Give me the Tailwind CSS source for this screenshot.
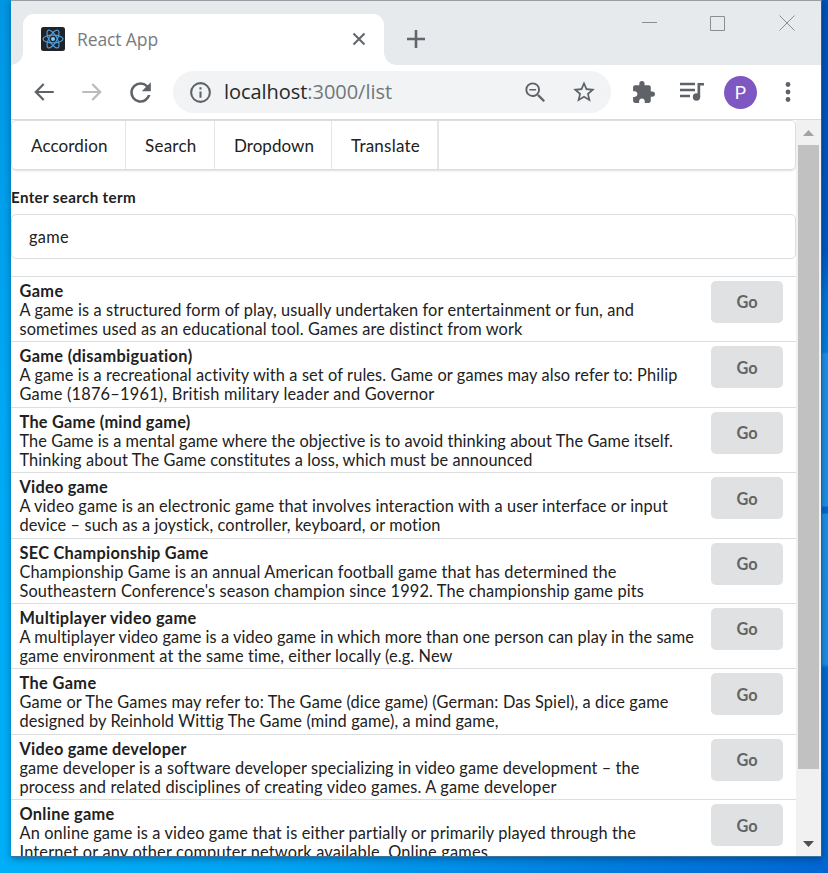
<!DOCTYPE html>
<html lang="en">
<head>
<meta charset="utf-8">
<title>React App</title>
<script src="https://cdn.jsdelivr.net/npm/@tailwindcss/browser@4"></script>
</head>
<body class="w-[828px] h-[873px] overflow-hidden bg-[linear-gradient(180deg,#0052b8_0,#0058c4_250px,#0078d8_300px,#0080e2_352px,#1c92e8_354px,#1c92e8_506px,#0068d0_507px,#0068d0_513px,#1c92e8_514px,#1c8fe6_664px,#006cd0_668px,#0068d0_830px),linear-gradient(180deg,#0096e2_0,#00a8f4_400px,#00aff8_860px),linear-gradient(90deg,#00aff8_0,#00a2f2_35%,#0084e2_65%,#0066d2_100%)] bg-no-repeat bg-[position:right_top,left_top,left_bottom] bg-[size:12px_857px,12px_857px,828px_16px] pl-[11px]">
<div class="w-[811px] h-[857px] flex flex-col bg-white overflow-hidden border-r border-b border-t border-t-[#9a9da1] border-r-[#2a5f96] border-b-[#39739f] shadow-[0_2px_7px_rgba(0,20,50,0.4)]">
  <header class="shrink-0 h-[64px] bg-[#e6eaed] flex items-end">
    <div class="w-[12px] h-[12px] shrink-0 bg-[radial-gradient(circle_at_0_0,#e6eaed_11.5px,#fff_12px)]"></div>
    <div class="w-[361px] h-[51px] shrink-0 bg-white rounded-t-[11px] flex items-center pl-[18px] pr-[18px] pb-[2px]">
      <svg class="w-6 h-6 shrink-0" viewBox="0 0 24 24"><rect width="24" height="24" rx="2.5" fill="#222326"/><g fill="none" stroke="#4d9fe0" stroke-width="1.2"><ellipse cx="12" cy="12" rx="10" ry="3.9"/><ellipse cx="12" cy="12" rx="10" ry="3.9" transform="rotate(60 12 12)"/><ellipse cx="12" cy="12" rx="10" ry="3.9" transform="rotate(120 12 12)"/></g><circle cx="12" cy="12" r="2" fill="#8cc8f5"/></svg>
      <span class="ml-[12px] text-[17.500px] leading-6 text-[#777b7f] font-['Open_Sans',sans-serif] whitespace-nowrap" data-fit="81">React App</span>
      <svg class="w-[14px] h-[14px] ml-auto" viewBox="0 0 14 14" stroke="#63666a" stroke-width="2.1"><path d="M1.5 1.5 12.5 12.5M12.5 1.5 1.5 12.5"/></svg>
    </div>
    <div class="w-[12px] h-[12px] shrink-0 bg-[radial-gradient(circle_at_100%_0,#e6eaed_11.5px,#fff_12px)]"></div>
    <svg class="w-[20px] h-[20px] ml-[10px] mb-[16px]" viewBox="0 0 20 20" stroke="#626569" stroke-width="2.6"><path d="M10 1v18M1 10h18"/></svg>
    <svg class="w-[153px] h-[16px] ml-auto mb-[34px] mr-[26px]" viewBox="0 0 153 16" fill="none" stroke="#8b8e91" stroke-width="1"><path d="M0 7.500h15"/><path d="M68.500 1.500h14v14h-14z"/><path d="M137.500 .5 152.500 15.500M152.500 .5 137.500 15.500"/></svg>
  </header>
  <div class="shrink-0 h-[55px] border-b border-[#d9dadc] flex items-center pl-[20px]">
    <svg class="w-[26px] h-[26px]" viewBox="0 0 24 24" fill="#5f6368"><path d="M21 11H6.830l5.590-5.590L11 4l-8 8 8 8 1.410-1.410L6.830 13H21v-2z"/></svg>
    <svg class="w-[26px] h-[26px] ml-[22px]" viewBox="0 0 24 24" fill="#b9bbbd"><path d="M13 4l-1.410 1.410L17.170 11H3v2h14.170l-5.580 5.590L13 20l8-8z"/></svg>
    <svg class="w-[31px] h-[31px] ml-[20px]" viewBox="0 0 24 24" fill="#5f6368"><path d="M17.650 6.350A7.958 7.958 0 0 0 12 4a8 8 0 1 0 7.730 10h-2.080A6 6 0 1 1 12 6c1.660 0 3.140.69 4.220 1.780L13 11h7V4l-2.350 2.350z"/></svg>
    <div class="w-[438px] h-[42px] rounded-full bg-[#f1f3f4] ml-[17px] flex items-center pl-[15px] shrink-0 text-[20px] font-['Open_Sans',sans-serif]">
      <svg class="w-[25px] h-[25px] shrink-0" viewBox="0 0 24 24" fill="#5f6368"><path d="M11 17h2v-6h-2v6zm1-15a10 10 0 1 0 0 20 10 10 0 0 0 0-20zm0 18a8 8 0 1 1 0-16 8 8 0 0 1 0 16zM11 9h2V7h-2v2z"/></svg>
      <span class="ml-[11px] whitespace-nowrap text-[#73777b]" data-fit="168"><span class="text-[#26282b]">localhost</span>:3000/list</span>
      <svg class="w-[27px] h-[27px] ml-auto" viewBox="0 0 24 24" fill="#5f6368"><path d="M15.500 14h-.79l-.28-.27A6.471 6.471 0 0 0 16 9.500 6.500 6.500 0 1 0 9.500 16c1.610 0 3.090-.59 4.230-1.570l.27.28v.79l5 4.990L20.490 19l-4.990-5zm-6 .3a4.800 4.800 0 1 1 0-9.600 4.800 4.800 0 0 1 0 9.600zM6.500 8.800h6v1.500h-6z"/></svg>
      <svg class="w-[26px] h-[26px] ml-[22px] mr-[14px]" viewBox="0 0 24 24" fill="#5f6368"><path d="M22 9.240l-7.190-.62L12 2 9.190 8.630 2 9.240l5.460 4.730L5.820 21 12 17.270 18.180 21l-1.630-7.030L22 9.240zM12 15.400l-3.760 2.270 1-4.280-3.320-2.880 4.380-.38L12 6.100l1.710 4.040 4.380.38-3.320 2.880 1 4.280L12 15.400z"/></svg>
    </div>
    <svg class="w-[25px] h-[25px] ml-[20px]" viewBox="0 0 24 24" fill="#5f6368"><path d="M20.500 11H19V7c0-1.100-.9-2-2-2h-4V3.500a2.500 2.500 0 0 0-5 0V5H4c-1.100 0-1.990.9-1.990 2v3.800H3.500c1.490 0 2.700 1.210 2.700 2.700s-1.210 2.700-2.700 2.700H2V20c0 1.100.9 2 2 2h3.800v-1.500c0-1.490 1.210-2.700 2.700-2.700 1.490 0 2.700 1.210 2.700 2.700V22H17c1.100 0 2-.9 2-2v-4h1.500a2.500 2.500 0 0 0 0-5z"/></svg>
    <svg class="w-[25px] h-[22px] ml-[23px]" viewBox="0 0 25 22"><path d="M1 3h15M1 9h15M1 15h10" stroke="#5f6368" stroke-width="2.300"/><path d="M18.500 2H25v2.500h-3.800V16h-2.700z" fill="#5f6368"/><circle cx="17.500" cy="16" r="3.700" fill="#5f6368"/></svg>
    <div class="w-[33px] h-[33px] rounded-full bg-[#7e57c2] ml-[20px] shrink-0 flex items-center justify-center text-white text-[18px] font-[Roboto,sans-serif]">P</div>
    <svg class="w-[6px] h-[22px] ml-[28px]" viewBox="0 0 6 22" fill="#5f6368"><circle cx="3" cy="3.500" r="2.400"/><circle cx="3" cy="11" r="2.400"/><circle cx="3" cy="18.500" r="2.400"/></svg>
  </div>
  <div class="flex-1 min-h-0 flex">
    <main class="w-[785px] shrink-0 h-full overflow-hidden font-[Lato,sans-serif] text-[16.330px] leading-[19.050px] text-[#212121]">
      <nav class="h-[50px] border border-[#dcddde] rounded-[5px] shadow-[0_1px_2px_rgba(34,36,38,0.15)] flex whitespace-nowrap text-[17px]">
        <a class="w-[114px] border-r border-[#e4e5e6] flex items-center pl-[19px] pt-px"><span data-fit="76.500">Accordion</span></a>
        <a class="w-[89px] border-r border-[#e4e5e6] flex items-center pl-[19px] pt-px"><span data-fit="51.500">Search</span></a>
        <a class="w-[117px] border-r border-[#e4e5e6] flex items-center pl-[19px] pt-px"><span data-fit="80">Dropdown</span></a>
        <a class="w-[107px] border-r-2 border-[#e4e5e6] flex items-center pl-[19px] pt-px"><span data-fit="69">Translate</span></a>
      </nav>
      <div class="mt-[17px] h-[20px] leading-[20px] text-[15.170px] font-bold whitespace-nowrap"><span data-fit="125">Enter search term</span></div>
      <div class="mt-[7px] h-[45px] border border-[#dcddde] rounded-[5px] flex items-center pl-[17px]"><span data-fit="40">game</span></div>
      <div id="results" class="mt-[17px]"></div>
    </main>
    <aside class="flex-1 bg-[#f1f1f1] flex flex-col items-center">
      <svg class="w-[11px] h-[6px] mt-[10px] shrink-0" viewBox="0 0 11 6"><path d="M5.500 0 11 6H0z" fill="#a3a3a3"/></svg>
      <div class="w-[21px] h-[624px] mt-[9px] bg-[#c1c1c1] shrink-0"></div>
      <svg class="w-[11px] h-[6px] mt-[72px] shrink-0" viewBox="0 0 11 6"><path d="M5.500 6 11 0H0z" fill="#505050"/></svg>
    </aside>
  </div>
</div>
<script>
// Each line of text is paired with the width it is set to.
const items = [
 ["Game",44,"A game is a structured form of play, usually undertaken for entertainment or fun, and",614.5,"sometimes used as an educational tool. Games are distinct from work",503],
 ["Game (disambiguation)",173,"A game is a recreational activity with a set of rules. Game or games may also refer to: Philip",658,"Game (1876–1961), British military leader and Governor",415],
 ["The Game (mind game)",171,"The Game is a mental game where the objective is to avoid thinking about The Game itself.",653.5,"Thinking about The Game constitutes a loss, which must be announced",513],
 ["Video game",88.5,"A video game is an electronic game that involves interaction with a user interface or input",648.5,"device – such as a joystick, controller, keyboard, or motion",421],
 ["SEC Championship Game",189,"Championship Game is an annual American football game that has determined the",597,"Southeastern Conference's season champion since 1992. The championship game pits",624.5],
 ["Multiplayer video game",177,"A multiplayer video game is a video game in which more than one person can play in the same",674.5,"game environment at the same time, either locally (e.g. New",433],
 ["The Game",77,"Game or The Games may refer to: The Game (dice game) (German: Das Spiel), a dice game",649,"designed by Reinhold Wittig The Game (mind game), a mind game,",479],
 ["Video game developer",167,"game developer is a software developer specializing in video game development – the",620,"process and related disciplines of creating video games. A game developer",537],
 ["Online game",95,"An online game is a video game that is either partially or primarily played through the",616.5,"Internet or any other computer network available. Online games",468.5]
];
document.getElementById('results').innerHTML = items.map(([t,tw,a,aw,b,bw]) => `
<article class="h-[65.400px] border-t border-[#dcddde] flex justify-between pl-[8.500px] pr-[13px] pt-[4px]">
  <div class="whitespace-nowrap w-[680px]"><h3 class="font-bold"><span data-fit="${tw}">${t}</span></h3><p><span data-fit="${aw}">${a}</span></p><p><span data-fit="${bw}">${b}</span></p></div>
  <button class="w-[72px] h-[42px] rounded-[5px] bg-[#e0e1e2] text-[#636465] font-bold shrink-0">Go</button>
</article>`).join('');
function fit() {
  document.querySelectorAll('[data-fit]').forEach(el => {
    el.style.letterSpacing = '0.01px';
    const w = el.getBoundingClientRect().width;
    el.style.letterSpacing = (0.01 + (parseFloat(el.dataset.fit) - w) / el.textContent.length) + 'px';
  });
}
window.addEventListener('load', () => { fit(); document.fonts.ready.then(fit); requestAnimationFrame(fit); });
</script>
</body>
</html>
